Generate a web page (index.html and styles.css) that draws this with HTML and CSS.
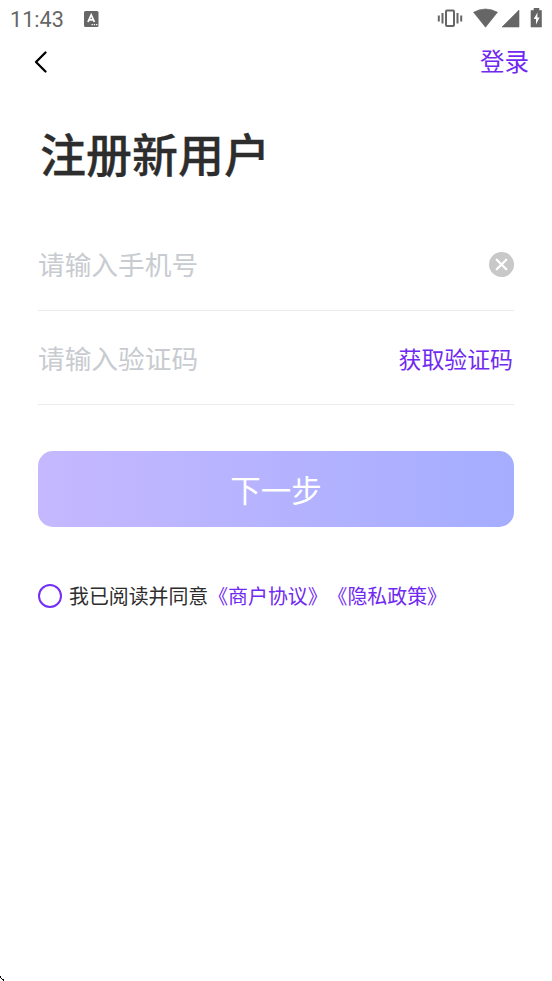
FILE: index.html
```html
<!DOCTYPE html>
<html lang="zh-CN">
<head>
<meta charset="utf-8">
<title>注册新用户</title>
<link rel="stylesheet" href="styles.css">
</head>
<body>
<div class="status">
  <span class="time">11:43</span>
  <svg class="app" width="15" height="16" viewBox="0 0 15 16"><rect width="14.5" height="16" rx="1.5" fill="#666"/><path d="M4 11 7.2 4 10.4 11M5.2 8.8h4" fill="none" stroke="#fff" stroke-width="1.8"/><path d="M7.5 13.7h1.3m1 0h1.3m1 0h1.3" stroke="#fff" stroke-width="1.2"/></svg>
  <svg class="system" width="106" height="22" viewBox="0 0 106 22">
    <g fill="none" stroke="#666" stroke-width="2"><rect x="9" y="2.5" width="8" height="15.5" rx="1"/><path d="M5.5 5v10.5M20.5 5v10.5M1.8 7.5v6M24.2 7.5v6"/></g>
    <path d="M36.5 4.2Q48.5-2.2 60.5 4.2L48.5 19.2ZM82 2v17H65ZM94 2.5h3V0h5v2.5h2.5V19H94Z" fill="#666" stroke="#666" stroke-width=".6" stroke-linejoin="round"/>
    <path d="M100.5 4.5 96.7 11h2.3v5.5l3.6-7h-2.3z" fill="#fff"/>
  </svg>
</div>
<header class="nav">
  <svg width="14" height="24" viewBox="0 0 14 24"><path d="M11.5 2.5 2 12l9.5 9.5" fill="none" stroke="#000" stroke-width="2.3" stroke-linecap="round" stroke-linejoin="round"/></svg>
  <a class="login">登录</a>
</header>
<main>
  <h1>注册新用户</h1>
  <div class="field phone">
    <span class="placeholder">请输入手机号</span>
    <svg width="25" height="25" viewBox="0 0 25 25"><circle cx="12.5" cy="12.5" r="12.5" fill="#c8c8c8"/><path d="m7.7 7.7 9.6 9.6m0-9.6-9.6 9.6" stroke="#fff" stroke-width="2.3" stroke-linecap="round"/></svg>
  </div>
  <div class="field code">
    <span class="placeholder">请输入验证码</span>
    <a class="get-code">获取验证码</a>
  </div>
  <button class="next">下一步</button>
  <div class="agree"><span class="radio"></span><span>我已阅读并同意</span><a>《商户协议》《隐私政策》</a></div>
</main>
<svg class="corner" width="4" height="5" viewBox="0 0 4 5"><path d="M0 0h1v2H0zM1 2h1v1H1zM2 3h2v1H2zM3 4h1v1H3z"/></svg>
</body>
</html>
```
FILE: styles.css
```css
* { box-sizing: border-box; }
body { margin: 0; height: 981px; overflow: hidden; background: #fff; color: #2d2d2d; font-family: "Noto Sans CJK SC", sans-serif; position: relative; }
a { color: #7029f2; }
.status { height: 38px; display: flex; align-items: center; padding: 0 10px; }
.time { font: 21.6px/38px Roboto, sans-serif; color: #666; width: 74px; padding-top: 1px; }
.app { margin-bottom: 1px; }
.system { margin-left: auto; margin-right: -1px; margin-bottom: 1px; }
.nav { height: 48px; display: flex; align-items: center; justify-content: space-between; padding: 0 23px 0 34px; }
.login { font-size: 24.5px; line-height: 36px; margin-top: -2px; }
main { padding: 30px 38px 0; }
h1 { margin: 0 0 2px 2px; font-size: 46px; line-height: 72px; font-weight: 500; height: 76px; -webkit-text-stroke: 0.3px #2d2d2d; }
.field { display: flex; align-items: center; justify-content: space-between; border-bottom: 1px solid #ebebeb; }
.phone { height: 117px; padding-top: 24px; }
.code { height: 94px; }
.placeholder { font-size: 26.7px; line-height: 40px; color: #c8cbd0; }
.get-code { font-size: 22.9px; line-height: 34px; margin-right: 1px; }
.next { display: block; width: 476px; height: 76.5px; margin-top: 45.5px; padding: 0; border: 0; border-radius: 15px; background: linear-gradient(90deg, #c5b8ff, #a5adff); color: #fff; font: 30.5px/77px "Noto Sans CJK SC", sans-serif; }
.agree { display: flex; align-items: center; height: 30px; margin-top: 54px; font-size: 19.9px; line-height: 30px; white-space: nowrap; text-spacing-trim: space-all; }
.radio { width: 24px; height: 24px; margin-right: 7px; border: 2px solid #7430f5; border-radius: 50%; }
.corner { position: absolute; left: 0; bottom: 0; }
```
